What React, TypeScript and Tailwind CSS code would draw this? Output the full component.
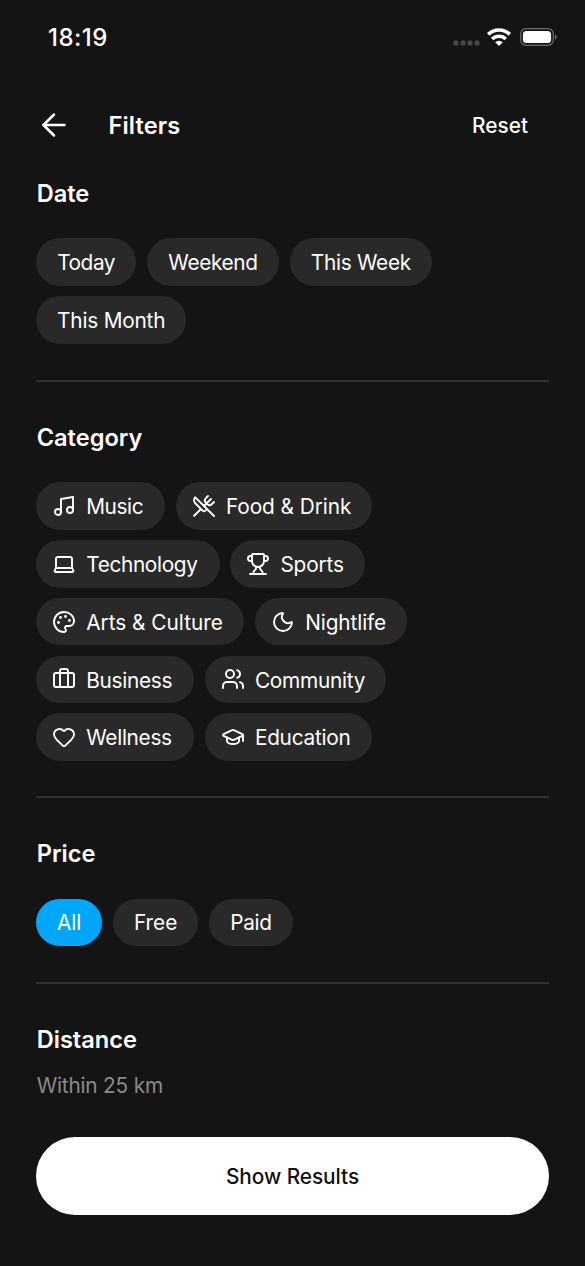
import type { ReactNode } from 'react';
import {
  ArrowLeft,
  Briefcase,
  GraduationCap,
  Heart,
  Laptop,
  Moon,
  Music,
  Palette,
  Trophy,
  Users,
  UtensilsCrossed,
  type LucideIcon,
} from 'lucide-react';

type ChipData = { label: string; size: string; icon?: LucideIcon; active?: boolean };

const dates: ChipData[] = [
  { label: 'Today', size: 'w-[100.3px] tracking-[-0.45px]' },
  { label: 'Weekend', size: 'w-[132px] tracking-[-0.35px]' },
  { label: 'This Week', size: 'w-[142.4px] tracking-[-0.3px]' },
  { label: 'This Month', size: 'w-[150.4px] tracking-[-0.2px]' },
];

const categories: ChipData[] = [
  { label: 'Music', size: 'w-[129px] tracking-[-0.4px]', icon: Music },
  { label: 'Food & Drink', size: 'w-[196.6px] tracking-[-0.05px]', icon: UtensilsCrossed },
  { label: 'Technology', size: 'w-[183.5px] tracking-[-0.35px]', icon: Laptop },
  { label: 'Sports', size: 'w-[134.8px] tracking-[-0.15px]', icon: Trophy },
  { label: 'Arts & Culture', size: 'w-[208.3px]', icon: Palette },
  { label: 'Nightlife', size: 'w-[152.3px] tracking-[-0.1px]', icon: Moon },
  { label: 'Business', size: 'w-[158px] tracking-[-0.3px]', icon: Briefcase },
  { label: 'Community', size: 'w-[181.6px] tracking-[-0.25px]', icon: Users },
  { label: 'Wellness', size: 'w-[158px] tracking-[-0.3px]', icon: Heart },
  { label: 'Education', size: 'w-[167.2px] tracking-[-0.25px]', icon: GraduationCap },
];

const prices: ChipData[] = [
  { label: 'All', size: 'w-[66.4px]', active: true },
  { label: 'Free', size: 'w-[85px]' },
  { label: 'Paid', size: 'w-[84.4px] tracking-[-0.3px]' },
];

function Chip({ label, size, icon: Icon, active }: ChipData) {
  return (
    <button
      className={`flex h-[47.5px] shrink-0 items-center rounded-full text-[20.8px] whitespace-nowrap text-white ${size} ${
        active ? 'bg-[#00a6f8]' : 'bg-[#292929]'
      } ${Icon ? 'gap-[10.2px] pl-4' : 'justify-center'}`}
    >
      {Icon && <Icon size={24} strokeWidth={1.9} className="shrink-0" />}
      <span className="pt-[1.6px]">{label}</span>
    </button>
  );
}

function Title({ children }: { children: ReactNode }) {
  return <h2 className="pl-[0.7px] text-[23.6px] leading-[30px] font-semibold">{children}</h2>;
}

function Section({ title, className, children }: { title: string; className: string; children: ReactNode }) {
  return (
    <section className={`border-b-2 border-[#303030] ${className}`}>
      <Title>{title}</Title>
      {children}
    </section>
  );
}

function StatusBar() {
  return (
    <div className="flex h-[76px] items-center justify-between pr-[27px] pl-[48px]">
      <span className="text-[24px] font-medium tracking-[0.5px]">18:19</span>
      <div className="flex items-center pb-[2px]">
        <svg width="28" height="8" viewBox="0 0 28 8" fill="#484848" className="mt-3">
          <rect x="0.5" y="1.6" width="5" height="5" rx="1.5" />
          <rect x="7.5" y="1.6" width="5" height="5" rx="1.5" />
          <rect x="14.5" y="1.6" width="5" height="5" rx="1.5" />
          <rect x="21.5" y="1.6" width="5" height="5" rx="1.5" />
        </svg>
        <svg width="26" height="19" viewBox="0 0 26 19" fill="none" stroke="#fff" strokeWidth="3.6" className="ml-[5px]">
          <path d="M2.2 6.4a15.4 15.4 0 0 1 21.6 0" />
          <path d="M6.2 11a9.6 9.6 0 0 1 13.6 0" />
          <path d="M9.2 14.2a5.4 5.4 0 0 1 7.6 0L13 18z" fill="#fff" stroke="none" />
        </svg>
        <svg width="38" height="18" viewBox="0 0 38 18" className="ml-[8px]">
          <rect x="0.7" y="0.7" width="32.6" height="16.6" rx="5.4" fill="none" stroke="#6c6c6c" strokeWidth="1.2" />
          <rect x="2.9" y="2.9" width="28.2" height="12.2" rx="3.6" fill="#fff" />
          <path d="M35 6.2c2.2.8 2.2 4.8 0 5.6z" fill="#6c6c6c" />
        </svg>
      </div>
    </div>
  );
}

export default function App() {
  return (
    <main className="flex h-[1266px] w-[585px] flex-col bg-[#141414] font-['Inter',sans-serif] text-white antialiased">
      <StatusBar />
      <header className="flex h-[98px] items-center pr-[57px] pl-9">
        <ArrowLeft size={36} strokeWidth={1.7} />
        <h1 className="ml-[36.6px] pt-[2px] text-[23.6px] font-semibold tracking-[0.1px]">Filters</h1>
        <button className="ml-auto pt-[2px] text-[20.8px] font-medium">Reset</button>
      </header>
      <div className="flex flex-col px-9">
        <Section title="Date" className="h-[208px] pt-[5px]">
          <div className="mt-[29.4px] flex flex-wrap gap-x-[10.7px] gap-y-[10.5px]">
            {dates.map((c) => (
              <Chip key={c.label} {...c} />
            ))}
          </div>
        </Section>
        <Section title="Category" className="h-[416px] pt-[41px]">
          <div className="mt-[29.3px] flex w-[400px] flex-wrap gap-x-[10.7px] gap-y-[10.3px]">
            {categories.map((c) => (
              <Chip key={c.label} {...c} />
            ))}
          </div>
        </Section>
        <Section title="Price" className="h-[186px] pt-[41px]">
          <div className="mt-[29.5px] flex gap-x-[10.7px]">
            {prices.map((c) => (
              <Chip key={c.label} {...c} />
            ))}
          </div>
        </Section>
        <section className="pt-[41px]">
          <Title>Distance</Title>
          <p className="mt-[16.3px] pl-[0.7px] text-[20.8px] leading-[30px] tracking-[-0.2px] text-[#8a8a8a]">
            Within 25 km
          </p>
        </section>
        <button className="mt-[35.7px] h-[78px] rounded-full bg-white pt-[1.5px] text-[20.8px] font-medium tracking-[-0.05px] text-[#111]">
          Show Results
        </button>
      </div>
    </main>
  );
}
